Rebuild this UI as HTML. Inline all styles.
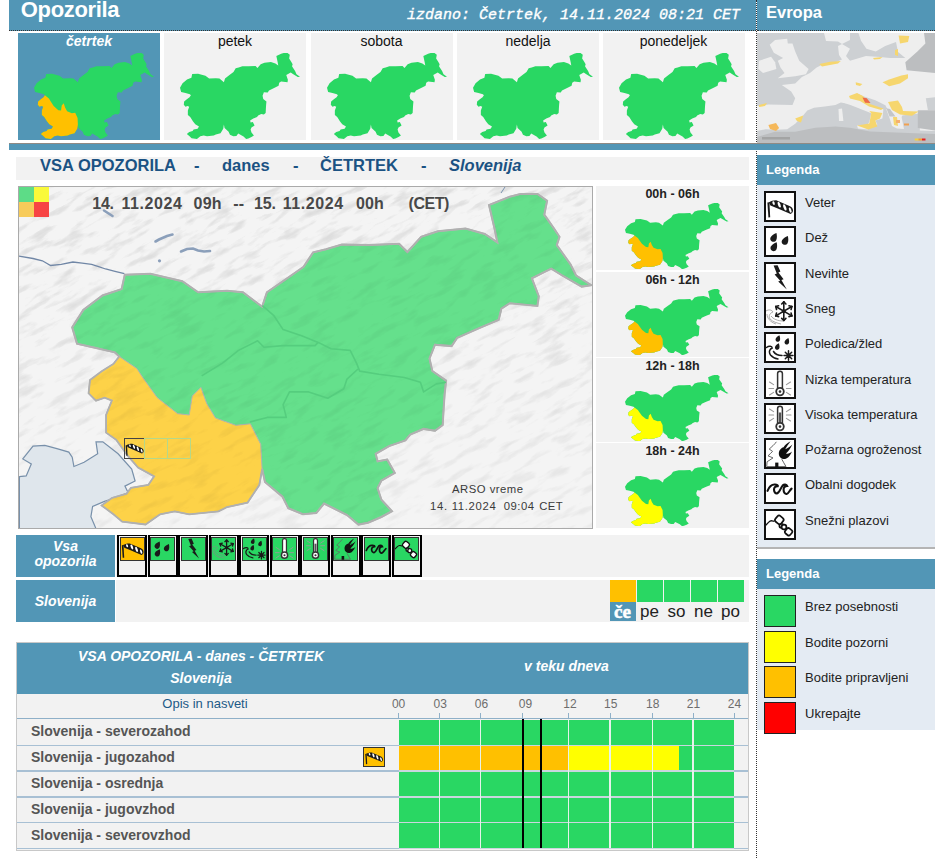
<!DOCTYPE html><html><head><meta charset="utf-8"><style>
*{margin:0;padding:0;box-sizing:border-box}
html,body{width:940px;height:858px;overflow:hidden;background:#fff;font-family:"Liberation Sans",sans-serif;position:relative}
.a{position:absolute}
.w{color:#fff}
.b{font-weight:bold}
.i{font-style:italic}
svg{display:block}
.nw{white-space:nowrap}
</style></head><body>
<svg width="0" height="0" class="a" style="left:0;top:0"><defs><path id="slo" d="M71.2 326.4 L82.3 308.9 L101.5 294.5 L120.6 288.1 L123.8 273.8 L149.4 272.8 L181.3 280.2 L197.2 291.3 L226.0 289.7 L241.9 291.3 L261.1 305.7 L265.9 291.3 L286.6 277.0 L302.6 265.8 L312.1 251.4 L325.0 248.2 L340.9 243.5 L367.7 244.1 L398.1 242.7 L406.4 251.0 L420.2 235.8 L436.8 230.3 L464.5 227.5 L483.8 233.0 L496.3 241.3 L493.5 227.5 L488.0 204.0 L508.7 195.7 L519.8 192.9 L536.4 192.9 L546.1 199.8 L543.3 213.7 L553.0 227.5 L558.5 235.8 L555.8 244.1 L569.6 263.5 L575.1 274.5 L590.3 284.2 L580.7 285.6 L561.3 274.5 L550.2 267.6 L530.9 277.3 L537.8 295.3 L536.4 305.0 L508.7 302.2 L500.4 307.7 L497.7 318.8 L478.3 327.1 L456.2 336.8 L450.6 345.1 L434.0 343.7 L428.5 357.5 L431.3 370.0 L445.1 379.6 L443.6 393.4 L442.7 406.8 L441.7 424.0 L434.0 429.8 L422.6 427.9 L409.2 433.6 L404.4 439.4 L388.1 445.1 L374.7 452.8 L376.6 460.4 L386.2 458.5 L393.8 471.9 L380.4 479.6 L376.6 487.2 L380.4 498.7 L391.0 510.2 L380.4 516.0 L367.0 521.7 L357.4 523.6 L346.0 514.0 L338.3 510.2 L323.0 502.6 L315.3 512.1 L301.9 513.2 L287.3 507.3 L281.5 495.7 L264.0 481.0 L261.1 468.0 L258.2 484.0 L246.5 501.5 L226.1 505.9 L217.4 510.3 L188.2 513.2 L173.7 510.3 L159.1 513.2 L144.5 523.4 L121.2 520.5 L112.5 513.2 L100.8 504.4 L111.0 497.1 L125.6 492.8 L130.0 487.0 L147.4 484.0 L153.3 475.3 L137.2 466.5 L127.0 454.9 L115.4 438.8 L105.2 431.6 L105.2 414.0 L111.0 399.5 L103.7 396.6 L95.0 399.5 L87.7 392.2 L89.1 379.1 L100.8 370.4 L112.5 363.0 L118.3 355.5 L113.9 351.4 L95.0 347.0 L76.0 342.7Z"/><path id="sw" d="M118.3 355.5 L135.8 367.4 L141.6 376.2 L156.2 396.6 L176.6 412.6 L188.2 414.0 L191.2 395.1 L199.9 386.4 L205.7 402.4 L214.5 417.0 L234.9 424.3 L249.4 422.8 L259.7 443.2 L261.1 468.0 L258.2 484.0 L246.5 501.5 L226.1 505.9 L217.4 510.3 L188.2 513.2 L173.7 510.3 L159.1 513.2 L144.5 523.4 L121.2 520.5 L112.5 513.2 L100.8 504.4 L111.0 497.1 L125.6 492.8 L130.0 487.0 L147.4 484.0 L153.3 475.3 L137.2 466.5 L127.0 454.9 L115.4 438.8 L105.2 431.6 L105.2 414.0 L111.0 399.5 L103.7 396.6 L95.0 399.5 L87.7 392.2 L89.1 379.1 L100.8 370.4 L112.5 363.0 L118.3 355.5Z"/><symbol id="ic-veter" viewBox="0 0 32 32"><g fill="#1a1a1a"><path d="M3.4 11.6 L5.4 11.2 L6.2 26.2 L4.4 26.4Z"/>
<path d="M4.8 11.4 C7 10 10 9.2 12.8 9.4 L26 15.2 C29.6 16.8 30.2 21.6 26.6 23 L14.4 17.8 L6.4 14.4Z"/></g>
<g fill="#fff"><ellipse cx="9.6" cy="12.1" rx="1.1" ry="1.9" transform="rotate(-20 9.6 12.1)"/><ellipse cx="15.2" cy="13.6" rx="1.3" ry="3.1" transform="rotate(-20 15.2 13.6)"/><ellipse cx="20.8" cy="16.4" rx="1.3" ry="3.3" transform="rotate(-20 20.8 16.4)"/><ellipse cx="26.2" cy="19.1" rx="1.1" ry="2.7" transform="rotate(-20 26.2 19.1)"/></g></symbol><symbol id="ic-dez" viewBox="0 0 32 32"><g fill="#1a1a1a"><path d="M0,-4.6 C1.6,-2.6 3,-0.6 3,1.6 C3,3.4 1.6,4.6 0,4.6 C-1.6,4.6 -3,3.4 -3,1.6 C-3,-0.6 -1.6,-2.6 0,-4.6Z" transform="translate(10.2 11.2) rotate(28) scale(1.05)"/><path d="M0,-4.6 C1.6,-2.6 3,-0.6 3,1.6 C3,3.4 1.6,4.6 0,4.6 C-1.6,4.6 -3,3.4 -3,1.6 C-3,-0.6 -1.6,-2.6 0,-4.6Z" transform="translate(21.6 14.2) rotate(28) scale(1.05)"/><path d="M0,-4.6 C1.6,-2.6 3,-0.6 3,1.6 C3,3.4 1.6,4.6 0,4.6 C-1.6,4.6 -3,3.4 -3,1.6 C-3,-0.6 -1.6,-2.6 0,-4.6Z" transform="translate(10.4 20.6) rotate(28) scale(1.05)"/></g></symbol><symbol id="ic-nevihte" viewBox="0 0 32 32"><path fill="#1a1a1a" d="M9.6 3.6 L13.6 3.2 L16.4 9.6 L14.4 10.4 L19.6 17.2 L17.4 18 L22.8 27.6 L14.2 19.6 L16.2 18.8 L10.6 12.6 L12.8 11.6Z"/></symbol><symbol id="ic-sneg" viewBox="0 0 32 32"><g stroke="#888" stroke-width="0.7" fill="none"><path d="M2 14 C5 12 8 13 9 15 C6 16 4 19 6 22 C9 25 13 26 17 27"/><path d="M3 17 C3 21 6 25 12 27"/><path d="M7 19 C9 22 14 24 19 24"/></g><g stroke="#1a1a1a" stroke-width="1.6" fill="none" stroke-linecap="round"><path d="M19.80 4.90 L19.80 23.50"/><path d="M11.75 9.55 L27.85 18.85"/><path d="M27.85 9.55 L11.75 18.85"/><path d="M19.80 23.50 L17.70 21.40"/><path d="M19.80 23.50 L21.90 21.40"/><path d="M11.75 18.85 L12.52 15.98"/><path d="M11.75 18.85 L14.62 19.62"/><path d="M11.75 9.55 L14.62 8.78"/><path d="M11.75 9.55 L12.52 12.42"/><path d="M19.80 4.90 L21.90 7.00"/><path d="M19.80 4.90 L17.70 7.00"/><path d="M27.85 9.55 L27.08 12.42"/><path d="M27.85 9.55 L24.98 8.78"/><path d="M27.85 18.85 L24.98 19.62"/><path d="M27.85 18.85 L27.08 15.98"/></g><circle cx="19.8" cy="14.2" r="1.92" fill="#1a1a1a"/></symbol><symbol id="ic-poledica" viewBox="0 0 32 32"><g fill="#1a1a1a"><path d="M0,-4.6 C1.6,-2.6 3,-0.6 3,1.6 C3,3.4 1.6,4.6 0,4.6 C-1.6,4.6 -3,3.4 -3,1.6 C-3,-0.6 -1.6,-2.6 0,-4.6Z" transform="translate(14.2 6.4) rotate(20) scale(0.75)"/><path d="M0,-4.6 C1.6,-2.6 3,-0.6 3,1.6 C3,3.4 1.6,4.6 0,4.6 C-1.6,4.6 -3,3.4 -3,1.6 C-3,-0.6 -1.6,-2.6 0,-4.6Z" transform="translate(23.2 9.2) rotate(20) scale(0.75)"/><path d="M0,-4.6 C1.6,-2.6 3,-0.6 3,1.6 C3,3.4 1.6,4.6 0,4.6 C-1.6,4.6 -3,3.4 -3,1.6 C-3,-0.6 -1.6,-2.6 0,-4.6Z" transform="translate(13.6 14.4) rotate(20) scale(0.75)"/></g><g stroke="#1a1a1a" stroke-width="1.5" fill="none" stroke-linecap="round"><path d="M2.5 15.5 C5 13.6 8 14 8.2 16 C5.5 17 4.5 20 6.5 23 C8.5 25.5 11 26.5 14 27"/><path d="M9.5 19.5 C11 22 14 23.5 18 23.5"/><path d="M20 23.5 L29 23.5 M24.5 18.8 L24.5 28.2 M21.3 20.3 L27.7 26.7 M27.7 20.3 L21.3 26.7"/></g></symbol><symbol id="ic-nizka" viewBox="0 0 32 32"><g stroke="#999" stroke-width="1.1" stroke-linecap="round"><path d="M5.5 14 L9.6 16.6 M5 20.5 L9.6 20.5 M5.5 27 L9.6 24.4 M26.5 14 L22.4 16.6 M27 20.5 L22.4 20.5 M26.5 27 L22.4 24.4"/></g><path d="M13.6 20.6 L13.6 5.6 A2.4 2.4 0 0 1 18.4 5.6 L18.4 20.6" fill="#fff" stroke="#333" stroke-width="1.5"/><circle cx="16" cy="23.6" r="3.8" fill="#fff" stroke="#333" stroke-width="1.8"/><circle cx="16" cy="23.6" r="1.3" fill="#333"/></symbol><symbol id="ic-visoka" viewBox="0 0 32 32"><g stroke="#999" stroke-width="1.1" stroke-linecap="round"><path d="M5.5 6 L9.6 8.6 M5 12 L9.6 12 M5.5 18 L9.6 15.4 M26.5 6 L22.4 8.6 M27 12 L22.4 12 M26.5 18 L22.4 15.4"/></g><path d="M13.6 20.6 L13.6 5.6 A2.4 2.4 0 0 1 18.4 5.6 L18.4 20.6" fill="#fff" stroke="#333" stroke-width="1.5"/><rect x="14.8" y="9.5" width="2.4" height="12" fill="#555"/><circle cx="16" cy="23.6" r="3.8" fill="#fff" stroke="#333" stroke-width="1.8"/><circle cx="16" cy="23.6" r="1.3" fill="#333"/></symbol><symbol id="ic-pozar" viewBox="0 0 32 32"><g stroke="#666" stroke-width="1" fill="none" stroke-linejoin="round"><path d="M12.4 3.8 C10.5 6.5 7.5 9 5.2 11.1 L8.6 13.4 C7 15 5.5 16.5 4 17.8 L9 19.9 C7 21.3 5 22.5 3.1 23.7 L2.7 28.6 L22 28.6 C20.5 26 19 23.5 17.8 21.2"/></g><rect x="11.2" y="24.6" width="3.2" height="4.6" fill="#111"/><path d="M24 8.8 C19 8 14.8 11 14.8 15.5 C14.8 19.2 17.5 21.2 20.8 21 C24.2 20.6 26.2 17.5 28 13.6 C25.8 15.4 23.8 16.2 22 15.4 C24.4 13.4 26.4 10.6 28.4 6.6 C25.6 9.2 23.2 10.6 21.2 11.2 C22.4 9.2 23.8 6.8 26.6 3.2 C23 5.2 20.6 7.2 19.6 9.2Z" fill="#111"/></symbol><symbol id="ic-obalni" viewBox="0 0 32 32"><path d="M3.5 17.8 C5 14 8 11.3 11 11.5 C13 11.6 14.2 12.3 13.8 13.2 C11.5 13 10 14.6 10 16.6 C10 19 11.4 20.6 13 20.4 C15.5 20 16.5 15 18.6 12.6 C20.2 11 22.6 11.4 23.2 13 C21 13 19.6 14.6 19.6 16.8 C19.6 19.5 21 21.2 22.6 21 C24.6 20.6 25.6 17.2 27.6 15.6" stroke="#111" stroke-width="2.1" fill="none" stroke-linecap="round"/></symbol><symbol id="ic-plazovi" viewBox="0 0 32 32"><path d="M1.8 16.2 L4.5 13.4 C5.8 12 6.8 11.6 8 11.8 L10.5 12.4" stroke="#111" stroke-width="1.3" fill="none"/><g stroke="#111" stroke-width="1.7" fill="#fff"><rect x="11.6" y="7.2" width="7.4" height="7.4" rx="2.2" transform="rotate(40 15.3 10.9)"/><circle cx="17.4" cy="16.8" r="2"/><circle cx="20" cy="18" r="2.4"/><rect x="21.4" y="19.6" width="6.4" height="6.4" rx="2" transform="rotate(40 24.6 22.8)"/></g></symbol><symbol id="icr-veter" viewBox="2.5 3 27 26"><g fill="#1a1a1a"><path d="M3.4 11.6 L5.4 11.2 L6.2 26.2 L4.4 26.4Z"/>
<path d="M4.8 11.4 C7 10 10 9.2 12.8 9.4 L26 15.2 C29.6 16.8 30.2 21.6 26.6 23 L14.4 17.8 L6.4 14.4Z"/></g>
<g fill="#fff"><ellipse cx="9.6" cy="12.1" rx="1.1" ry="1.9" transform="rotate(-20 9.6 12.1)"/><ellipse cx="15.2" cy="13.6" rx="1.3" ry="3.1" transform="rotate(-20 15.2 13.6)"/><ellipse cx="20.8" cy="16.4" rx="1.3" ry="3.3" transform="rotate(-20 20.8 16.4)"/><ellipse cx="26.2" cy="19.1" rx="1.1" ry="2.7" transform="rotate(-20 26.2 19.1)"/></g></symbol><symbol id="icr-dez" viewBox="2.5 2.5 27 27"><g fill="#1a1a1a"><path d="M0,-4.6 C1.6,-2.6 3,-0.6 3,1.6 C3,3.4 1.6,4.6 0,4.6 C-1.6,4.6 -3,3.4 -3,1.6 C-3,-0.6 -1.6,-2.6 0,-4.6Z" transform="translate(10.2 11.2) rotate(28) scale(1.05)"/><path d="M0,-4.6 C1.6,-2.6 3,-0.6 3,1.6 C3,3.4 1.6,4.6 0,4.6 C-1.6,4.6 -3,3.4 -3,1.6 C-3,-0.6 -1.6,-2.6 0,-4.6Z" transform="translate(21.6 14.2) rotate(28) scale(1.05)"/><path d="M0,-4.6 C1.6,-2.6 3,-0.6 3,1.6 C3,3.4 1.6,4.6 0,4.6 C-1.6,4.6 -3,3.4 -3,1.6 C-3,-0.6 -1.6,-2.6 0,-4.6Z" transform="translate(10.4 20.6) rotate(28) scale(1.05)"/></g></symbol><symbol id="icr-nevihte" viewBox="2.5 2.5 27 27"><path fill="#1a1a1a" d="M9.6 3.6 L13.6 3.2 L16.4 9.6 L14.4 10.4 L19.6 17.2 L17.4 18 L22.8 27.6 L14.2 19.6 L16.2 18.8 L10.6 12.6 L12.8 11.6Z"/></symbol><symbol id="icr-sneg" viewBox="2.5 2.5 27 27"><g stroke="#888" stroke-width="0.7" fill="none"><path d="M2 14 C5 12 8 13 9 15 C6 16 4 19 6 22 C9 25 13 26 17 27"/><path d="M3 17 C3 21 6 25 12 27"/><path d="M7 19 C9 22 14 24 19 24"/></g><g stroke="#1a1a1a" stroke-width="1.6" fill="none" stroke-linecap="round"><path d="M19.80 4.90 L19.80 23.50"/><path d="M11.75 9.55 L27.85 18.85"/><path d="M27.85 9.55 L11.75 18.85"/><path d="M19.80 23.50 L17.70 21.40"/><path d="M19.80 23.50 L21.90 21.40"/><path d="M11.75 18.85 L12.52 15.98"/><path d="M11.75 18.85 L14.62 19.62"/><path d="M11.75 9.55 L14.62 8.78"/><path d="M11.75 9.55 L12.52 12.42"/><path d="M19.80 4.90 L21.90 7.00"/><path d="M19.80 4.90 L17.70 7.00"/><path d="M27.85 9.55 L27.08 12.42"/><path d="M27.85 9.55 L24.98 8.78"/><path d="M27.85 18.85 L24.98 19.62"/><path d="M27.85 18.85 L27.08 15.98"/></g><circle cx="19.8" cy="14.2" r="1.92" fill="#1a1a1a"/></symbol><symbol id="icr-poledica" viewBox="2.5 2.5 27 27"><g fill="#1a1a1a"><path d="M0,-4.6 C1.6,-2.6 3,-0.6 3,1.6 C3,3.4 1.6,4.6 0,4.6 C-1.6,4.6 -3,3.4 -3,1.6 C-3,-0.6 -1.6,-2.6 0,-4.6Z" transform="translate(14.2 6.4) rotate(20) scale(0.75)"/><path d="M0,-4.6 C1.6,-2.6 3,-0.6 3,1.6 C3,3.4 1.6,4.6 0,4.6 C-1.6,4.6 -3,3.4 -3,1.6 C-3,-0.6 -1.6,-2.6 0,-4.6Z" transform="translate(23.2 9.2) rotate(20) scale(0.75)"/><path d="M0,-4.6 C1.6,-2.6 3,-0.6 3,1.6 C3,3.4 1.6,4.6 0,4.6 C-1.6,4.6 -3,3.4 -3,1.6 C-3,-0.6 -1.6,-2.6 0,-4.6Z" transform="translate(13.6 14.4) rotate(20) scale(0.75)"/></g><g stroke="#1a1a1a" stroke-width="1.5" fill="none" stroke-linecap="round"><path d="M2.5 15.5 C5 13.6 8 14 8.2 16 C5.5 17 4.5 20 6.5 23 C8.5 25.5 11 26.5 14 27"/><path d="M9.5 19.5 C11 22 14 23.5 18 23.5"/><path d="M20 23.5 L29 23.5 M24.5 18.8 L24.5 28.2 M21.3 20.3 L27.7 26.7 M27.7 20.3 L21.3 26.7"/></g></symbol><symbol id="icr-nizka" viewBox="2.5 2.5 27 27"><g stroke="#999" stroke-width="1.1" stroke-linecap="round"><path d="M5.5 14 L9.6 16.6 M5 20.5 L9.6 20.5 M5.5 27 L9.6 24.4 M26.5 14 L22.4 16.6 M27 20.5 L22.4 20.5 M26.5 27 L22.4 24.4"/></g><path d="M13.6 20.6 L13.6 5.6 A2.4 2.4 0 0 1 18.4 5.6 L18.4 20.6" fill="#fff" stroke="#333" stroke-width="1.5"/><circle cx="16" cy="23.6" r="3.8" fill="#fff" stroke="#333" stroke-width="1.8"/><circle cx="16" cy="23.6" r="1.3" fill="#333"/></symbol><symbol id="icr-visoka" viewBox="2.5 2.5 27 27"><g stroke="#999" stroke-width="1.1" stroke-linecap="round"><path d="M5.5 6 L9.6 8.6 M5 12 L9.6 12 M5.5 18 L9.6 15.4 M26.5 6 L22.4 8.6 M27 12 L22.4 12 M26.5 18 L22.4 15.4"/></g><path d="M13.6 20.6 L13.6 5.6 A2.4 2.4 0 0 1 18.4 5.6 L18.4 20.6" fill="#fff" stroke="#333" stroke-width="1.5"/><rect x="14.8" y="9.5" width="2.4" height="12" fill="#555"/><circle cx="16" cy="23.6" r="3.8" fill="#fff" stroke="#333" stroke-width="1.8"/><circle cx="16" cy="23.6" r="1.3" fill="#333"/></symbol><symbol id="icr-pozar" viewBox="2.5 2.5 27 27"><g stroke="#666" stroke-width="1" fill="none" stroke-linejoin="round"><path d="M12.4 3.8 C10.5 6.5 7.5 9 5.2 11.1 L8.6 13.4 C7 15 5.5 16.5 4 17.8 L9 19.9 C7 21.3 5 22.5 3.1 23.7 L2.7 28.6 L22 28.6 C20.5 26 19 23.5 17.8 21.2"/></g><rect x="11.2" y="24.6" width="3.2" height="4.6" fill="#111"/><path d="M24 8.8 C19 8 14.8 11 14.8 15.5 C14.8 19.2 17.5 21.2 20.8 21 C24.2 20.6 26.2 17.5 28 13.6 C25.8 15.4 23.8 16.2 22 15.4 C24.4 13.4 26.4 10.6 28.4 6.6 C25.6 9.2 23.2 10.6 21.2 11.2 C22.4 9.2 23.8 6.8 26.6 3.2 C23 5.2 20.6 7.2 19.6 9.2Z" fill="#111"/></symbol><symbol id="icr-obalni" viewBox="2.5 2.5 27 27"><path d="M3.5 17.8 C5 14 8 11.3 11 11.5 C13 11.6 14.2 12.3 13.8 13.2 C11.5 13 10 14.6 10 16.6 C10 19 11.4 20.6 13 20.4 C15.5 20 16.5 15 18.6 12.6 C20.2 11 22.6 11.4 23.2 13 C21 13 19.6 14.6 19.6 16.8 C19.6 19.5 21 21.2 22.6 21 C24.6 20.6 25.6 17.2 27.6 15.6" stroke="#111" stroke-width="2.1" fill="none" stroke-linecap="round"/></symbol><symbol id="icr-plazovi" viewBox="2.5 2.5 27 27"><path d="M1.8 16.2 L4.5 13.4 C5.8 12 6.8 11.6 8 11.8 L10.5 12.4" stroke="#111" stroke-width="1.3" fill="none"/><g stroke="#111" stroke-width="1.7" fill="#fff"><rect x="11.6" y="7.2" width="7.4" height="7.4" rx="2.2" transform="rotate(40 15.3 10.9)"/><circle cx="17.4" cy="16.8" r="2"/><circle cx="20" cy="18" r="2.4"/><rect x="21.4" y="19.6" width="6.4" height="6.4" rx="2" transform="rotate(40 24.6 22.8)"/></g></symbol></defs></svg>
<div class="a" style="left:756px;top:0;width:1px;height:858px;border-left:1px dotted #333"></div>
<div class="a" style="left:9px;top:0;width:747px;height:31px;background:#5296b6;border-bottom:1px dotted #333"></div>
<div class="a w b nw" style="left:20.8px;top:-2.8px;font-size:22px;line-height:26px;letter-spacing:-0.35px">Opozorila</div>
<div class="a w i nw" style="left:407px;top:5.5px;font-family:'Liberation Mono',monospace;font-size:15px;line-height:20px;-webkit-text-stroke:0.35px #fff">izdano: Četrtek, 14.11.2024 08:21 CET</div>
<div class="a" style="left:757px;top:0;width:178px;height:31px;background:#5296b6;border-bottom:1px dotted #333"></div>
<div class="a w b nw" style="left:766px;top:1px;font-size:16.5px;line-height:22px">Evropa</div>
<div class="a" style="left:18px;top:33px;width:142px;height:107px;background:#5296b6"></div>
<div class="a w b i nw" style="left:18px;top:33px;width:142px;text-align:center;font-size:14px;line-height:17px">četrtek</div>
<svg class="a" style="left:34px;top:52.7px" width="120" height="86" viewBox="71.2 192.9 519.1 330.7" preserveAspectRatio="none"><use href="#slo" fill="#29d763"/><use href="#sw" fill="#ffc000"/></svg>
<div class="a" style="left:164px;top:33px;width:142px;height:107px;background:#f2f2f2"></div>
<div class="a nw" style="left:164px;top:33px;width:142px;text-align:center;font-size:14px;line-height:17px;color:#111">petek</div>
<svg class="a" style="left:180px;top:52.7px" width="120" height="86" viewBox="71.2 192.9 519.1 330.7" preserveAspectRatio="none"><use href="#slo" fill="#29d763"/></svg>
<div class="a" style="left:310.5px;top:33px;width:142px;height:107px;background:#f2f2f2"></div>
<div class="a nw" style="left:310.5px;top:33px;width:142px;text-align:center;font-size:14px;line-height:17px;color:#111">sobota</div>
<svg class="a" style="left:326.5px;top:52.7px" width="120" height="86" viewBox="71.2 192.9 519.1 330.7" preserveAspectRatio="none"><use href="#slo" fill="#29d763"/></svg>
<div class="a" style="left:457px;top:33px;width:142px;height:107px;background:#f2f2f2"></div>
<div class="a nw" style="left:457px;top:33px;width:142px;text-align:center;font-size:14px;line-height:17px;color:#111">nedelja</div>
<svg class="a" style="left:473px;top:52.7px" width="120" height="86" viewBox="71.2 192.9 519.1 330.7" preserveAspectRatio="none"><use href="#slo" fill="#29d763"/></svg>
<div class="a" style="left:602.5px;top:33px;width:142px;height:107px;background:#f2f2f2"></div>
<div class="a nw" style="left:602.5px;top:33px;width:142px;text-align:center;font-size:14px;line-height:17px;color:#111">ponedeljek</div>
<svg class="a" style="left:618.5px;top:52.7px" width="120" height="86" viewBox="71.2 192.9 519.1 330.7" preserveAspectRatio="none"><use href="#slo" fill="#29d763"/></svg>
<svg class="a" style="left:757px;top:33px" width="178" height="110" viewBox="757 33 178 110"><rect x="757" y="33" width="178" height="110" fill="#eeeeee"/><path fill="#cdd0d3"  d="M757.0 33.0 L824.0 33.0 L826.0 41.0 L838.0 41.5 L842.0 44.0 L838.0 46.0 L839.0 55.0 L842.0 59.5 L835.4 62.2 L824.7 63.5 L816.6 67.5 L810.0 72.9 L801.9 76.9 L795.2 83.6 L781.8 84.9 L791.2 91.6 L795.2 98.3 L792.5 105.0 L768.4 104.4 L760.4 105.7 L757.0 106.0 Z"/><path fill="#cdd0d3"  d="M846.0 56.0 L850.0 60.8 L866.0 56.0 L880.0 57.0 L890.0 58.0 L905.3 58.0 L898.0 52.0 L896.0 42.0 L885.2 46.0 L875.8 51.4 L866.4 48.8 L861.0 40.7 L858.4 33.0 L850.0 33.0 L850.0 40.0 L842.0 44.0 L850.0 48.8 Z"/><path fill="#cdd0d3"  d="M757.0 131.0 L765.7 129.2 L776.4 129.8 L787.2 129.2 L795.2 123.8 L801.9 117.1 L807.3 110.4 L814.0 107.7 L824.7 106.4 L835.4 105.0 L840.8 102.4 L845.0 103.2 L852.0 103.0 L870.0 106.0 L886.0 108.5 L890.0 112.0 L901.6 115.4 L919.8 113.4 L919.8 130.5 L935.0 131.0 L935.0 143.0 L757.0 143.0 Z"/><path fill="#eeeeee"  d="M845.0 95.2 L857.1 93.1 L863.2 98.2 L869.3 105.3 L883.4 109.3 L882.4 118.4 L875.3 120.4 L877.3 124.5 L872.0 127.0 L866.0 126.5 L869.3 122.0 L871.3 113.3 L861.2 109.3 L851.1 105.3 L845.0 103.2 Z"/><path fill="#eeeeee"  d="M857.0 125.5 L866.0 126.0 L868.0 129.5 L858.0 128.5 Z"/><path fill="#eeeeee"  d="M886.0 108.5 L895.5 110.0 L903.0 114.0 L901.6 117.0 L904.0 129.0 L897.0 128.5 L892.0 126.0 L889.5 118.0 Z"/><path fill="#cdd0d3"  d="M857.1 93.6 L863.2 96.2 L875.3 100.2 L885.4 105.3 L887.4 109.3 L883.4 109.3 L869.3 105.3 L863.2 98.6 Z"/><path fill="#cdd0d3"  d="M925.8 98.2 L935.0 97.2 L935.0 110.3 L927.9 110.3 Z"/><path fill="#bcbec0"  d="M924.0 33.0 L935.0 33.0 L935.0 72.9 L906.6 70.2 L905.3 62.2 L917.4 51.4 L925.4 43.4 Z"/><path fill="#bcbec0"  d="M917.8 110.3 L935.0 110.3 L935.0 130.5 L917.8 128.0 Z"/><path fill="#bcbec0"  d="M757.0 137.0 L775.0 131.8 L795.2 131.8 L815.3 127.8 L835.4 126.5 L850.0 127.8 L870.0 131.5 L935.0 134.0 L935.0 143.0 L757.0 143.0 Z"/><path fill="#c4c6c8"  d="M886.4 108.3 L890.0 109.0 L895.5 116.4 L889.5 116.4 Z"/><path fill="#eeeeee"  d="M775.1 40.0 L787.2 38.7 L787.8 43.4 L792.5 43.4 L795.2 51.4 L799.2 60.8 L808.6 68.9 L805.9 74.2 L795.2 76.2 L777.8 78.2 L784.5 72.9 L780.5 67.5 L777.8 60.8 L783.1 58.1 L773.8 52.8 L769.7 44.7 Z"/><path fill="#eeeeee"  d="M759.0 60.8 L771.1 56.8 L775.1 62.2 L776.4 68.9 L763.0 72.9 L758.3 68.9 Z"/><path fill="#eeeeee"  d="M838.5 109.0 L842.0 108.5 L843.4 121.1 L839.0 121.0 Z"/><path fill="#f6d66e"  d="M882.5 82.3 L889.2 79.6 L901.3 75.6 L908.0 74.2 L908.0 78.2 L900.0 83.6 L889.2 86.3 Z"/><path fill="#f6d66e"  d="M849.0 96.0 L857.0 93.0 L863.0 96.0 L866.0 100.0 L870.0 104.0 L883.4 108.5 L881.0 110.0 L869.0 106.5 L860.0 101.0 L850.0 98.5 Z"/><path fill="#f6d66e"  d="M869.3 111.0 L882.4 113.0 L880.0 118.4 L875.3 120.4 L877.3 126.5 L868.2 129.5 L857.1 125.5 L869.3 123.5 L871.3 113.3 Z"/><path fill="#f6d66e"  d="M888.0 102.0 L898.0 100.5 L902.0 107.0 L903.0 111.0 L918.7 111.5 L912.0 115.8 L900.0 114.5 L892.0 110.0 Z"/><path fill="#f6d66e"  d="M893.0 117.0 L897.0 117.0 L898.0 126.0 L894.0 125.0 Z"/><path fill="#f6d66e"  d="M855.7 82.3 L862.4 84.0 L860.0 86.0 L856.0 85.0 Z"/><path fill="#f6d66e"  d="M819.3 64.0 L830.0 61.8 L840.8 61.0 L838.0 63.5 L822.0 66.5 Z"/><path fill="#f6d66e"  d="M795.2 118.4 L803.2 115.5 L801.0 122.5 L797.0 121.0 Z"/><path fill="#f6d66e"  d="M759.0 105.0 L767.0 103.0 L765.0 106.0 L759.0 107.0 Z"/><path fill="#f6d66e"  d="M898.6 35.4 L909.3 36.0 L908.0 42.0 L900.0 43.4 Z"/><path fill="#f6d66e"  d="M895.0 50.0 L898.0 49.0 L898.0 56.0 L895.0 55.0 Z"/><path fill="#f6d66e"  d="M873.0 58.0 L882.5 57.0 L880.0 59.0 L874.0 59.5 Z"/><path fill="#f5b85a"  d="M768.4 125.1 L776.0 123.0 L779.1 128.0 L776.0 131.0 L770.0 129.0 Z"/><path fill="#ee6a48"  d="M862.4 97.5 L866.8 98.3 L870.5 103.0 L865.1 102.7 Z"/><path fill="#f5b070"  d="M896.0 120.0 L900.0 120.0 L900.0 123.0 L896.0 123.0 Z"/><path fill="#f0a050"  d="M904.0 123.5 L909.0 123.5 L909.0 125.5 L904.0 125.5 Z"/><rect x="762" y="137" width="28" height="2.5" fill="#999" opacity="0.7"/><rect x="914.7" y="138.5" width="4" height="2" fill="#f5d040"/><rect x="918.5" y="138.5" width="3.5" height="2" fill="#f5a030"/><rect x="922" y="138.5" width="3.5" height="2" fill="#e82020"/></svg>
<div class="a" style="left:9px;top:143px;width:926px;height:7px;background:#5296b6;border-top:1px solid #8f8a84"></div>
<div class="a" style="left:16px;top:157px;width:733px;height:23px;background:#f2f2f2"></div>
<div class="a b nw" style="left:40px;top:155px;font-size:16.5px;line-height:20px;color:#1b5283">VSA OPOZORILA</div>
<div class="a b nw" style="left:194px;top:155px;font-size:16.5px;line-height:20px;color:#1b5283">-</div>
<div class="a b nw" style="left:222px;top:155px;font-size:16.5px;line-height:20px;color:#1b5283">danes</div>
<div class="a b nw" style="left:293px;top:155px;font-size:16.5px;line-height:20px;color:#1b5283">-</div>
<div class="a b nw" style="left:320px;top:155px;font-size:16.5px;line-height:20px;color:#1b5283">ČETRTEK</div>
<div class="a b nw" style="left:421px;top:155px;font-size:16.5px;line-height:20px;color:#1b5283">-</div>
<div class="a b nw i" style="left:449px;top:155px;font-size:16.5px;line-height:20px;color:#1b5283">Slovenija</div>
<div class="a" style="left:18px;top:186px;width:575px;height:343px;border:1.5px solid #aaa;background:#eeeeee;overflow:hidden"><svg class="a" style="left:-18px;top:-186px" width="940" height="858" viewBox="0 0 940 858"><defs><filter id="terr" x="-50%" y="-50%" width="200%" height="200%" filterUnits="userSpaceOnUse"><feTurbulence type="fractalNoise" baseFrequency="0.035 0.13" numOctaves="4" seed="11"/><feColorMatrix type="matrix" values="0 0 0 0 0  0 0 0 0 0  0 0 0 0 0  1 0 0 0 0"/><feComponentTransfer><feFuncA type="table" tableValues="0 0 0 0 0.6 1 1"/></feComponentTransfer></filter><linearGradient id="tg" x1="0" y1="0" x2="0" y2="1"><stop offset="0" stop-color="#fff"/><stop offset="0.45" stop-color="#bbb"/><stop offset="1" stop-color="#777"/></linearGradient><mask id="tm" maskUnits="userSpaceOnUse" x="0" y="0" width="940" height="858"><rect x="18" y="186" width="575" height="343" fill="url(#tg)"/></mask></defs><rect x="18" y="186" width="575" height="343" fill="#f4f4f4"/><g mask="url(#tm)"><g transform="rotate(-28 300 360)"><rect x="-100" y="0" width="800" height="720" fill="#000" filter="url(#terr)" opacity="0.1"/></g></g><path d="M18.4 475.7 L25.2 474.9 L30.3 463.0 L21.8 457.9 L32.0 445.1 L43.9 444.3 L55.9 447.7 L67.8 451.1 L71.2 456.2 L72.9 465.5 L83.1 461.3 L96.7 452.8 L95.0 440.9 L101.8 440.9 L117.1 452.8 L130.7 468.1 L134.1 480.0 L123.9 485.1 L127.3 491.9 L113.7 497.0 L103.5 500.4 L91.6 505.5 L89.9 515.7 L95.0 527.7 L18.4 527.7Z" fill="#dfe6ec" stroke="#7890aa" stroke-width="1.2"/><path d="M18 255.1 L32 257.5 L41.4 259.8 L49.6 264.5 L60.2 263.3 L71.9 261 L81.2 262.2 L90.6 263.3 L97.6 265.7 L104.6 268 L114 270.4 L123.4 272.7" stroke="#7187a6" stroke-width="1.3" fill="none"/><g stroke="#8b9fba" stroke-width="2.6" fill="none" stroke-linecap="round"><path d="M103 209.5 L111.5 215"/><path d="M154.5 240.5 L158 238.5 L166 235 L171.5 233.5"/><path d="M180 250.5 L186 248 L192 247.5 L197 249.5 L203 250.5 L209 250"/></g><circle cx="158.5" cy="259.8" r="1.6" fill="#8b9fba"/><path d="M500 192 L508 180" stroke="#7b93b0" stroke-width="1" fill="none"/><path d="M590 284 L600 287" stroke="#7b93b0" stroke-width="1" fill="none"/><use href="#slo" fill="#65e08c" stroke="#b3b3b3" stroke-width="2"/><use href="#sw" fill="#fdd248" stroke="#b3b3b3" stroke-width="1"/><clipPath id="sloclip"><use href="#slo"/></clipPath><g clip-path="url(#sloclip)"><g transform="rotate(-28 300 360)"><rect x="-100" y="0" width="800" height="720" fill="#0a4020" filter="url(#terr)" opacity="0.045"/></g></g><use href="#slo" fill="none" stroke="#b0b0b0" stroke-width="1.6"/><g fill="none" stroke="#55cd7e" stroke-width="1.6" stroke-linejoin="round"><path d="M261.4 304.7 L272.6 314.3 L282.1 328.6 L301.3 335 L317.2 341.4 L330 347.8 L349.2 349.4 L355.5 362.1 L358.7 370.1 L377.9 373.3 L403.4 376.5 L419.4 381.3 L422.6 390.9 L435.3 382.9 L445 381.3"/><path d="M200.7 374.9 L221.5 362.1 L237.5 349.4 L256.6 339.8 L263 346.2 L282.1 344.6 L314 344.6 L317.2 341.4"/><path d="M357 368 L346 378.1 L342.8 387.7 L326.8 397.2 L307.7 390.9 L288.5 390.9 L282.1 403.6 L285.3 416.4 L266.2 416.4 L249 421"/></g><path d="M18 186 h15 v15 h-15z" fill="#5ddc87"/><path d="M33 186 h15 v15 h-15z" fill="#f9f93a"/><path d="M18 201 h15 v15 h-15z" fill="#f7cb5a"/><path d="M33 201 h15 v15 h-15z" fill="#f74444"/><rect x="123.5" y="437.5" width="20" height="20" fill="none" stroke="#444" stroke-width="1"/><use href="#icr-veter" x="124" y="438" width="19" height="19"/><rect x="143.5" y="437.5" width="23" height="20" fill="none" stroke="#b5d88a" stroke-width="1"/><rect x="166.5" y="437.5" width="23" height="20" fill="none" stroke="#b5d88a" stroke-width="1"/></svg></div>
<div class="a nw b" style="left:92.2px;top:194.3px;font-size:16px;line-height:19px;color:#484848;letter-spacing:-0.2px">14.</div>
<div class="a nw b" style="left:121.4px;top:194.3px;font-size:16px;line-height:19px;color:#484848;letter-spacing:0.6px">11.2024</div>
<div class="a nw b" style="left:193.6px;top:194.3px;font-size:16px;line-height:19px;color:#484848;letter-spacing:0.15px">09h</div>
<div class="a nw b" style="left:233.2px;top:194.3px;font-size:16px;line-height:19px;color:#484848;letter-spacing:0.2px">--</div>
<div class="a nw b" style="left:254px;top:194.3px;font-size:16px;line-height:19px;color:#484848;letter-spacing:-0.2px">15.</div>
<div class="a nw b" style="left:282.7px;top:194.3px;font-size:16px;line-height:19px;color:#484848;letter-spacing:0.6px">11.2024</div>
<div class="a nw b" style="left:355.9px;top:194.3px;font-size:16px;line-height:19px;color:#484848;letter-spacing:0.15px">00h</div>
<div class="a nw b" style="left:408.5px;top:194.3px;font-size:16px;line-height:19px;color:#484848;letter-spacing:-0.45px">(CET)</div>
<div class="a nw" style="left:452px;top:481.5px;font-size:11.3px;line-height:14px;color:#3a3a3a;letter-spacing:0.5px">ARSO vreme</div>
<div class="a nw" style="left:430px;top:499px;font-size:11.3px;line-height:14px;color:#3a3a3a;letter-spacing:0.7px">14. 11.2024</div>
<div class="a nw" style="left:503.8px;top:499px;font-size:11.3px;line-height:14px;color:#3a3a3a;letter-spacing:0.5px">09:04</div>
<div class="a nw" style="left:539.3px;top:499px;font-size:11.3px;line-height:14px;color:#3a3a3a;letter-spacing:0.4px">CET</div>
<div class="a" style="left:596px;top:186px;width:153px;height:84px;background:#f2f2f2"></div>
<div class="a b nw" style="left:596px;top:187px;width:153px;text-align:center;font-size:12.5px;line-height:15px;color:#222">00h - 06h</div>
<svg class="a" style="left:625px;top:202.5px" width="103.5" height="66.2" viewBox="71.2 192.9 519.1 330.7" preserveAspectRatio="none"><use href="#slo" fill="#29d763"/><use href="#sw" fill="#ffc000"/></svg>
<div class="a" style="left:596px;top:272px;width:153px;height:85px;background:#f2f2f2"></div>
<div class="a b nw" style="left:596px;top:273px;width:153px;text-align:center;font-size:12.5px;line-height:15px;color:#222">06h - 12h</div>
<svg class="a" style="left:625px;top:288.5px" width="103.5" height="66.2" viewBox="71.2 192.9 519.1 330.7" preserveAspectRatio="none"><use href="#slo" fill="#29d763"/><use href="#sw" fill="#ffc000"/></svg>
<div class="a" style="left:596px;top:358px;width:153px;height:84px;background:#f2f2f2"></div>
<div class="a b nw" style="left:596px;top:359px;width:153px;text-align:center;font-size:12.5px;line-height:15px;color:#222">12h - 18h</div>
<svg class="a" style="left:625px;top:374.5px" width="103.5" height="66.2" viewBox="71.2 192.9 519.1 330.7" preserveAspectRatio="none"><use href="#slo" fill="#29d763"/><use href="#sw" fill="#ffff00"/></svg>
<div class="a" style="left:596px;top:443px;width:153px;height:85px;background:#f2f2f2"></div>
<div class="a b nw" style="left:596px;top:444px;width:153px;text-align:center;font-size:12.5px;line-height:15px;color:#222">18h - 24h</div>
<svg class="a" style="left:625px;top:459.5px" width="103.5" height="66.2" viewBox="71.2 192.9 519.1 330.7" preserveAspectRatio="none"><use href="#slo" fill="#29d763"/><use href="#sw" fill="#ffff00"/></svg>
<div class="a w b i" style="left:16px;top:535px;width:99px;height:42px;background:#5296b6;text-align:center;font-size:14px;line-height:14.5px;padding-top:4px">Vsa<br>opozorila</div>
<div class="a" style="left:116px;top:535px;width:633px;height:42px;background:#f2f2f2"></div>
<div class="a" style="left:117.0px;top:535px;width:30px;height:42px;border:2px solid #000;border-top-width:1.5px;background:#f2f2f2"></div>
<div class="a" style="left:119.5px;top:536.5px;width:25px;height:24px;background:#ffc000;border:1px solid #333"><svg width="23" height="22" viewBox="0 0 23 22"><use href="#icr-veter" x="0" y="0" width="23" height="22"/></svg></div>
<div class="a" style="left:147.5px;top:535px;width:30px;height:42px;border:2px solid #000;border-top-width:1.5px;background:#f2f2f2"></div>
<div class="a" style="left:150.0px;top:536.5px;width:25px;height:24px;background:#29d763;border:1px solid #333"><svg width="23" height="22" viewBox="0 0 23 22"><use href="#icr-dez" x="0" y="0" width="23" height="22"/></svg></div>
<div class="a" style="left:178.0px;top:535px;width:30px;height:42px;border:2px solid #000;border-top-width:1.5px;background:#f2f2f2"></div>
<div class="a" style="left:180.5px;top:536.5px;width:25px;height:24px;background:#29d763;border:1px solid #333"><svg width="23" height="22" viewBox="0 0 23 22"><use href="#icr-nevihte" x="0" y="0" width="23" height="22"/></svg></div>
<div class="a" style="left:208.5px;top:535px;width:30px;height:42px;border:2px solid #000;border-top-width:1.5px;background:#f2f2f2"></div>
<div class="a" style="left:211.0px;top:536.5px;width:25px;height:24px;background:#29d763;border:1px solid #333"><svg width="23" height="22" viewBox="0 0 23 22"><use href="#icr-sneg" x="0" y="0" width="23" height="22"/></svg></div>
<div class="a" style="left:239.0px;top:535px;width:30px;height:42px;border:2px solid #000;border-top-width:1.5px;background:#f2f2f2"></div>
<div class="a" style="left:241.5px;top:536.5px;width:25px;height:24px;background:#29d763;border:1px solid #333"><svg width="23" height="22" viewBox="0 0 23 22"><use href="#icr-poledica" x="0" y="0" width="23" height="22"/></svg></div>
<div class="a" style="left:269.5px;top:535px;width:30px;height:42px;border:2px solid #000;border-top-width:1.5px;background:#f2f2f2"></div>
<div class="a" style="left:272.0px;top:536.5px;width:25px;height:24px;background:#29d763;border:1px solid #333"><svg width="23" height="22" viewBox="0 0 23 22"><use href="#icr-nizka" x="0" y="0" width="23" height="22"/></svg></div>
<div class="a" style="left:300.0px;top:535px;width:30px;height:42px;border:2px solid #000;border-top-width:1.5px;background:#f2f2f2"></div>
<div class="a" style="left:302.5px;top:536.5px;width:25px;height:24px;background:#29d763;border:1px solid #333"><svg width="23" height="22" viewBox="0 0 23 22"><use href="#icr-visoka" x="0" y="0" width="23" height="22"/></svg></div>
<div class="a" style="left:330.5px;top:535px;width:30px;height:42px;border:2px solid #000;border-top-width:1.5px;background:#f2f2f2"></div>
<div class="a" style="left:333.0px;top:536.5px;width:25px;height:24px;background:#29d763;border:1px solid #333"><svg width="23" height="22" viewBox="0 0 23 22"><use href="#icr-pozar" x="0" y="0" width="23" height="22"/></svg></div>
<div class="a" style="left:361.0px;top:535px;width:30px;height:42px;border:2px solid #000;border-top-width:1.5px;background:#f2f2f2"></div>
<div class="a" style="left:363.5px;top:536.5px;width:25px;height:24px;background:#29d763;border:1px solid #333"><svg width="23" height="22" viewBox="0 0 23 22"><use href="#icr-obalni" x="0" y="0" width="23" height="22"/></svg></div>
<div class="a" style="left:391.5px;top:535px;width:30px;height:42px;border:2px solid #000;border-top-width:1.5px;background:#f2f2f2"></div>
<div class="a" style="left:394.0px;top:536.5px;width:25px;height:24px;background:#29d763;border:1px solid #333"><svg width="23" height="22" viewBox="0 0 23 22"><use href="#icr-plazovi" x="0" y="0" width="23" height="22"/></svg></div>
<div class="a w b i" style="left:16px;top:580px;width:99px;height:42px;background:#5296b6;text-align:center;font-size:14px;line-height:42px">Slovenija</div>
<div class="a" style="left:116px;top:580px;width:633px;height:42px;background:#f2f2f2"></div>
<div class="a" style="left:609.5px;top:580px;width:26px;height:22px;background:#ffc000"></div>
<div class="a w b nw" style="left:609.5px;top:602px;width:26px;height:19px;background:#5296b6;text-align:center;font-family:'Liberation Serif',serif;font-size:19px;line-height:19px;overflow:hidden;-webkit-text-stroke:0.5px #fff">če</div>
<div class="a" style="left:636.5px;top:580px;width:26px;height:22px;background:#29d763"></div>
<div class="a nw" style="left:636.5px;top:602px;width:26px;height:19px;text-align:center;font-size:17px;line-height:19px;color:#222;overflow:hidden">pe</div>
<div class="a" style="left:663.5px;top:580px;width:26px;height:22px;background:#29d763"></div>
<div class="a nw" style="left:663.5px;top:602px;width:26px;height:19px;text-align:center;font-size:17px;line-height:19px;color:#222;overflow:hidden">so</div>
<div class="a" style="left:690.5px;top:580px;width:26px;height:22px;background:#29d763"></div>
<div class="a nw" style="left:690.5px;top:602px;width:26px;height:19px;text-align:center;font-size:17px;line-height:19px;color:#222;overflow:hidden">ne</div>
<div class="a" style="left:717.5px;top:580px;width:26px;height:22px;background:#29d763"></div>
<div class="a nw" style="left:717.5px;top:602px;width:26px;height:19px;text-align:center;font-size:17px;line-height:19px;color:#222;overflow:hidden">po</div>
<div class="a" style="left:757px;top:155px;width:178px;height:30px;background:#5296b6"></div>
<div class="a w b nw" style="left:766px;top:162px;font-size:13px;line-height:16px">Legenda</div>
<div class="a" style="left:757px;top:185px;width:178px;height:364px;background:#e4ebf3;border-bottom:2px solid #b4b4b4"></div>
<div class="a" style="left:764px;top:191.0px;width:32px;height:31px;border:2px solid #111;background:#fff"><svg width="28" height="27" viewBox="2 2 28 27" preserveAspectRatio="none"><use href="#ic-veter" x="0" y="0" width="32" height="32"/></svg></div>
<div class="a nw" style="left:805px;top:195.0px;font-size:13px;line-height:15px;color:#222">Veter</div>
<div class="a" style="left:764px;top:226.3px;width:32px;height:31px;border:2px solid #111;background:#fff"><svg width="28" height="27" viewBox="2 2 28 27" preserveAspectRatio="none"><use href="#ic-dez" x="0" y="0" width="32" height="32"/></svg></div>
<div class="a nw" style="left:805px;top:230.3px;font-size:13px;line-height:15px;color:#222">Dež</div>
<div class="a" style="left:764px;top:261.6px;width:32px;height:31px;border:2px solid #111;background:#fff"><svg width="28" height="27" viewBox="2 2 28 27" preserveAspectRatio="none"><use href="#ic-nevihte" x="0" y="0" width="32" height="32"/></svg></div>
<div class="a nw" style="left:805px;top:265.6px;font-size:13px;line-height:15px;color:#222">Nevihte</div>
<div class="a" style="left:764px;top:296.9px;width:32px;height:31px;border:2px solid #111;background:#fff"><svg width="28" height="27" viewBox="2 2 28 27" preserveAspectRatio="none"><use href="#ic-sneg" x="0" y="0" width="32" height="32"/></svg></div>
<div class="a nw" style="left:805px;top:300.9px;font-size:13px;line-height:15px;color:#222">Sneg</div>
<div class="a" style="left:764px;top:332.2px;width:32px;height:31px;border:2px solid #111;background:#fff"><svg width="28" height="27" viewBox="2 2 28 27" preserveAspectRatio="none"><use href="#ic-poledica" x="0" y="0" width="32" height="32"/></svg></div>
<div class="a nw" style="left:805px;top:336.2px;font-size:13px;line-height:15px;color:#222">Poledica/žled</div>
<div class="a" style="left:764px;top:367.5px;width:32px;height:31px;border:2px solid #111;background:#fff"><svg width="28" height="27" viewBox="2 2 28 27" preserveAspectRatio="none"><use href="#ic-nizka" x="0" y="0" width="32" height="32"/></svg></div>
<div class="a nw" style="left:805px;top:371.5px;font-size:13px;line-height:15px;color:#222">Nizka temperatura</div>
<div class="a" style="left:764px;top:402.8px;width:32px;height:31px;border:2px solid #111;background:#fff"><svg width="28" height="27" viewBox="2 2 28 27" preserveAspectRatio="none"><use href="#ic-visoka" x="0" y="0" width="32" height="32"/></svg></div>
<div class="a nw" style="left:805px;top:406.8px;font-size:13px;line-height:15px;color:#222">Visoka temperatura</div>
<div class="a" style="left:764px;top:438.1px;width:32px;height:31px;border:2px solid #111;background:#fff"><svg width="28" height="27" viewBox="2 2 28 27" preserveAspectRatio="none"><use href="#ic-pozar" x="0" y="0" width="32" height="32"/></svg></div>
<div class="a nw" style="left:805px;top:442.1px;font-size:13px;line-height:15px;color:#222">Požarna ogroženost</div>
<div class="a" style="left:764px;top:473.4px;width:32px;height:31px;border:2px solid #111;background:#fff"><svg width="28" height="27" viewBox="2 2 28 27" preserveAspectRatio="none"><use href="#ic-obalni" x="0" y="0" width="32" height="32"/></svg></div>
<div class="a nw" style="left:805px;top:477.4px;font-size:13px;line-height:15px;color:#222">Obalni dogodek</div>
<div class="a" style="left:764px;top:508.7px;width:32px;height:31px;border:2px solid #111;background:#fff"><svg width="28" height="27" viewBox="2 2 28 27" preserveAspectRatio="none"><use href="#ic-plazovi" x="0" y="0" width="32" height="32"/></svg></div>
<div class="a nw" style="left:805px;top:512.7px;font-size:13px;line-height:15px;color:#222">Snežni plazovi</div>
<div class="a" style="left:757px;top:559px;width:178px;height:30px;background:#5296b6"></div>
<div class="a w b nw" style="left:766px;top:566px;font-size:13px;line-height:16px">Legenda</div>
<div class="a" style="left:757px;top:589px;width:178px;height:141px;background:#e4ebf3"></div>
<div class="a" style="left:764px;top:595.0px;width:32px;height:32px;border:1px solid #222;background:#29d763"></div>
<div class="a nw" style="left:805px;top:599.0px;font-size:13px;line-height:15px;color:#222">Brez posebnosti</div>
<div class="a" style="left:764px;top:630.5px;width:32px;height:32px;border:1px solid #222;background:#ffff00"></div>
<div class="a nw" style="left:805px;top:634.5px;font-size:13px;line-height:15px;color:#222">Bodite pozorni</div>
<div class="a" style="left:764px;top:666.0px;width:32px;height:32px;border:1px solid #222;background:#ffc000"></div>
<div class="a nw" style="left:805px;top:670.0px;font-size:13px;line-height:15px;color:#222">Bodite pripravljeni</div>
<div class="a" style="left:764px;top:701.5px;width:32px;height:32px;border:1px solid #222;background:#ff0000"></div>
<div class="a nw" style="left:805px;top:705.5px;font-size:13px;line-height:15px;color:#222">Ukrepajte</div>
<div class="a" style="left:16px;top:642px;width:733px;height:209px;border:1px solid #c8c8c8;background:#f2f2f2"></div>
<div class="a" style="left:17px;top:643px;width:731px;height:51px;background:#5296b6"></div>
<div class="a w b i nw" style="left:17px;top:644.5px;width:368px;text-align:center;font-size:14px;line-height:22.5px">VSA OPOZORILA - danes - ČETRTEK<br>Slovenija</div>
<div class="a w b i nw" style="left:385px;top:656px;width:363px;text-align:center;font-size:14px;line-height:20px">v teku dneva</div>
<div class="a nw" style="left:17px;top:696px;width:376px;text-align:center;font-size:13px;line-height:15px;color:#1d5a87">Opis in nasveti</div>
<div class="a" style="left:17px;top:717.5px;width:731px;height:1px;background:#8fb0c8"></div>
<div class="a nw" style="left:383.6px;top:697px;width:30px;text-align:center;font-size:12px;line-height:14px;color:#6d6d6d">00</div>
<div class="a" style="left:398.1px;top:713px;width:1px;height:5px;background:#8fb0c8"></div>
<div class="a nw" style="left:425.3px;top:697px;width:30px;text-align:center;font-size:12px;line-height:14px;color:#6d6d6d">03</div>
<div class="a" style="left:439.1px;top:713px;width:1px;height:5px;background:#8fb0c8"></div>
<div class="a nw" style="left:466.5px;top:697px;width:30px;text-align:center;font-size:12px;line-height:14px;color:#6d6d6d">06</div>
<div class="a" style="left:480.0px;top:713px;width:1px;height:5px;background:#8fb0c8"></div>
<div class="a nw" style="left:510.5px;top:697px;width:30px;text-align:center;font-size:12px;line-height:14px;color:#6d6d6d">09</div>
<div class="a" style="left:522.1px;top:713px;width:1px;height:5px;background:#8fb0c8"></div>
<div class="a nw" style="left:555.0px;top:697px;width:30px;text-align:center;font-size:12px;line-height:14px;color:#6d6d6d">12</div>
<div class="a" style="left:568.4px;top:713px;width:1px;height:5px;background:#8fb0c8"></div>
<div class="a nw" style="left:595.8px;top:697px;width:30px;text-align:center;font-size:12px;line-height:14px;color:#6d6d6d">15</div>
<div class="a" style="left:609.5px;top:713px;width:1px;height:5px;background:#8fb0c8"></div>
<div class="a nw" style="left:637.8px;top:697px;width:30px;text-align:center;font-size:12px;line-height:14px;color:#6d6d6d">18</div>
<div class="a" style="left:651.6px;top:713px;width:1px;height:5px;background:#8fb0c8"></div>
<div class="a nw" style="left:678.5px;top:697px;width:30px;text-align:center;font-size:12px;line-height:14px;color:#6d6d6d">21</div>
<div class="a" style="left:692.5px;top:713px;width:1px;height:5px;background:#8fb0c8"></div>
<div class="a nw" style="left:719.5px;top:697px;width:30px;text-align:center;font-size:12px;line-height:14px;color:#6d6d6d">24</div>
<div class="a" style="left:733.8px;top:713px;width:1px;height:5px;background:#8fb0c8"></div>
<div class="a b nw" style="left:31px;top:718.7px;font-size:14px;line-height:25px;color:#555">Slovenija - severozahod</div>
<div class="a" style="left:17px;top:744.5px;width:731px;height:1.5px;background:#a8c0d4"></div>
<div class="a" style="left:399px;top:744.5px;width:335px;height:1.5px;background:#c9d6de"></div>
<div class="a" style="left:399px;top:719.5px;width:335px;height:25.0px;background:#29d763"></div>
<div class="a b nw" style="left:31px;top:745.2px;font-size:14px;line-height:25px;color:#555">Slovenija - jugozahod</div>
<div class="a" style="left:17px;top:770.0px;width:731px;height:1.5px;background:#a8c0d4"></div>
<div class="a" style="left:399px;top:770.0px;width:335px;height:1.5px;background:#c9d6de"></div>
<div class="a" style="left:399px;top:746.0px;width:335px;height:24.0px;background:#29d763"></div>
<div class="a b nw" style="left:31px;top:771.2px;font-size:14px;line-height:25px;color:#555">Slovenija - osrednja</div>
<div class="a" style="left:17px;top:796.0px;width:731px;height:1.5px;background:#a8c0d4"></div>
<div class="a" style="left:399px;top:796.0px;width:335px;height:1.5px;background:#c9d6de"></div>
<div class="a" style="left:399px;top:771.5px;width:335px;height:24.5px;background:#29d763"></div>
<div class="a b nw" style="left:31px;top:797.2px;font-size:14px;line-height:25px;color:#555">Slovenija - jugovzhod</div>
<div class="a" style="left:17px;top:821.5px;width:731px;height:1.5px;background:#a8c0d4"></div>
<div class="a" style="left:399px;top:821.5px;width:335px;height:1.5px;background:#c9d6de"></div>
<div class="a" style="left:399px;top:797.5px;width:335px;height:24.0px;background:#29d763"></div>
<div class="a b nw" style="left:31px;top:822.7px;font-size:14px;line-height:25px;color:#555">Slovenija - severovzhod</div>
<div class="a" style="left:17px;top:847.5px;width:731px;height:1.5px;background:#a8c0d4"></div>
<div class="a" style="left:399px;top:847.5px;width:335px;height:1.5px;background:#c9d6de"></div>
<div class="a" style="left:399px;top:823.0px;width:335px;height:24.5px;background:#29d763"></div>
<div class="a" style="left:399px;top:746px;width:170px;height:24px;background:#ffc000"></div>
<div class="a" style="left:569px;top:746px;width:110px;height:24px;background:#ffff00"></div>
<div class="a" style="left:439.0px;top:719px;width:1.2px;height:129px;background:#e6f2ea"></div>
<div class="a" style="left:479.9px;top:719px;width:1.2px;height:129px;background:#e6f2ea"></div>
<div class="a" style="left:522.0px;top:719px;width:1.2px;height:129px;background:#e6f2ea"></div>
<div class="a" style="left:568.3px;top:719px;width:1.2px;height:129px;background:#e6f2ea"></div>
<div class="a" style="left:609.4px;top:719px;width:1.2px;height:129px;background:#e6f2ea"></div>
<div class="a" style="left:651.5px;top:719px;width:1.2px;height:129px;background:#e6f2ea"></div>
<div class="a" style="left:692.4px;top:719px;width:1.2px;height:129px;background:#e6f2ea"></div>
<div class="a" style="left:522px;top:719px;width:2px;height:129px;background:#000"></div>
<div class="a" style="left:540px;top:719px;width:2px;height:129px;background:#000"></div>
<div class="a" style="left:363px;top:747px;width:22px;height:20px;background:#ffc000;border:1px solid #333"><svg width="20" height="18"><use href="#icr-veter" x="0" y="0" width="20" height="18"/></svg></div>
</body></html>
